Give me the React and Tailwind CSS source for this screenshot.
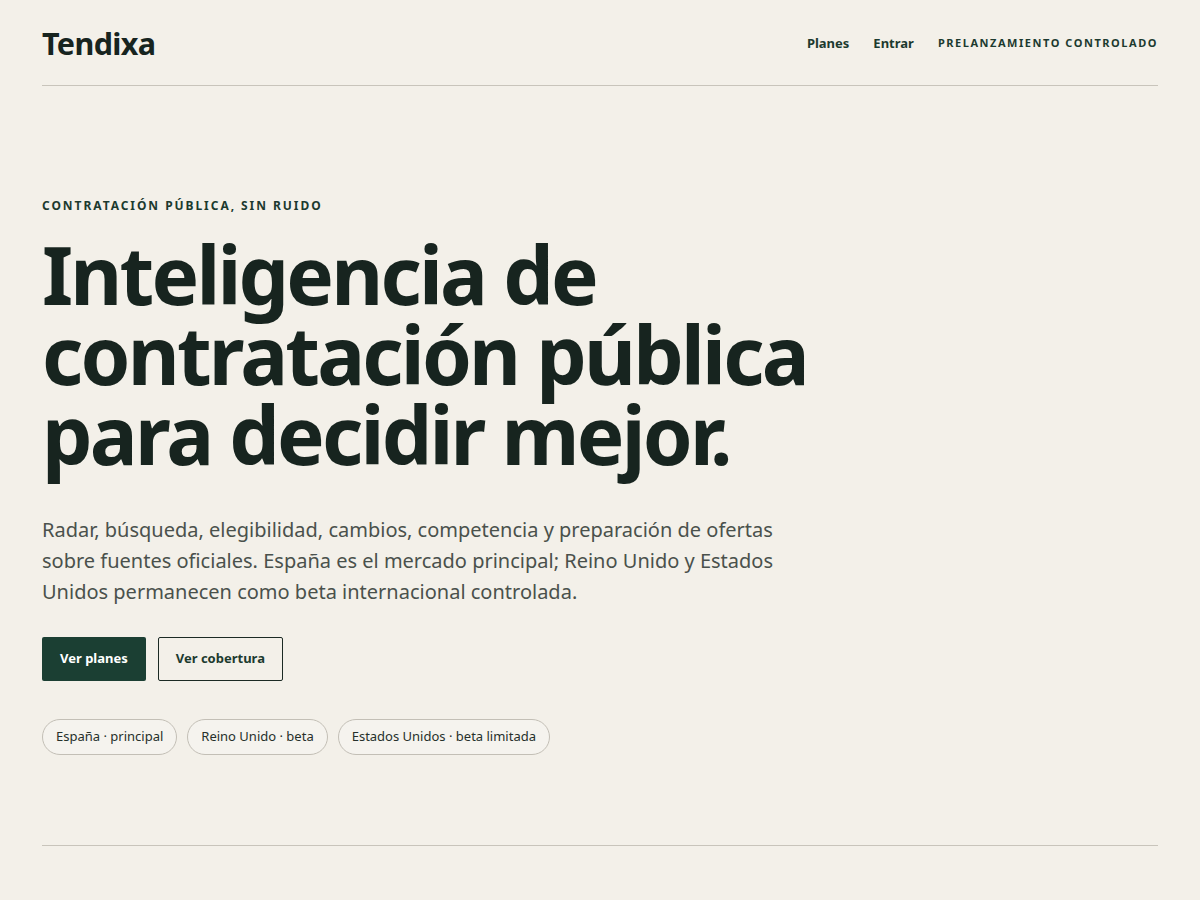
export default function App() {
  return (
    <div className="min-h-[900px] bg-[#f3f0e9] text-[#1a2620]" style={{ fontFamily: '"Noto Sans", sans-serif' }}>
      <div className="mx-auto max-w-[1116px]">
        <header className="flex h-[86px] items-center justify-between border-b border-[#c8c4bb] pt-[2px]">
          <div className="text-[30.5px] font-bold tracking-[-0.02em] text-[#17241f]">Tendixa</div>
          <nav className="flex items-center gap-6">
            <a className="text-[13px] font-bold text-[#1c3a2f]">Planes</a>
            <a className="text-[13px] font-bold text-[#1c3a2f]">Entrar</a>
            <span className="text-[11px] font-bold uppercase tracking-[0.14em] text-[#1c3a2f]">Prelanzamiento controlado</span>
          </nav>
        </header>
        <section className="border-b border-[#c8c4bb] pt-[111px] pb-[90px]">
          <p className="text-[12px] font-bold uppercase tracking-[0.162em] text-[#1c3a2f]">Contratación pública, sin ruido</p>
          <h1 className="mt-[19px] max-w-[820px] text-[80px] font-bold leading-[80px] tracking-[-0.035em] text-[#17241f]">
            Inteligencia de contratación pública para decidir mejor.
          </h1>
          <p className="mt-[40px] max-w-[760px] text-[20px] leading-[31px] text-[#4a514c]">
            Radar, búsqueda, elegibilidad, cambios, competencia y preparación de ofertas sobre fuentes oficiales. España es el mercado principal; Reino Unido y Estados Unidos permanecen como beta internacional controlada.
          </p>
          <div className="mt-[30px] flex gap-3">
            <button className="h-[44px] rounded-[2px] bg-[#1b3f33] px-[18px] text-[13px] font-bold text-white">Ver planes</button>
            <button className="h-[44px] rounded-[2px] border border-[#1b2a24] px-[17px] text-[13px] font-bold text-[#1c3a2f]">Ver cobertura</button>
          </div>
          <div className="mt-[38px] flex gap-[10px]">
            <span className="flex h-[36px] items-center rounded-full border border-[#c3bfb6] bg-[#f5f3ee] px-[13px] text-[13px] text-[#26302b]">España · principal</span>
            <span className="flex h-[36px] items-center rounded-full border border-[#c3bfb6] bg-[#f5f3ee] px-[13px] text-[13px] text-[#26302b]">Reino Unido · beta</span>
            <span className="flex h-[36px] items-center rounded-full border border-[#c3bfb6] bg-[#f5f3ee] px-[13px] text-[13px] text-[#26302b]">Estados Unidos · beta limitada</span>
          </div>
        </section>
      </div>
    </div>
  );
}
